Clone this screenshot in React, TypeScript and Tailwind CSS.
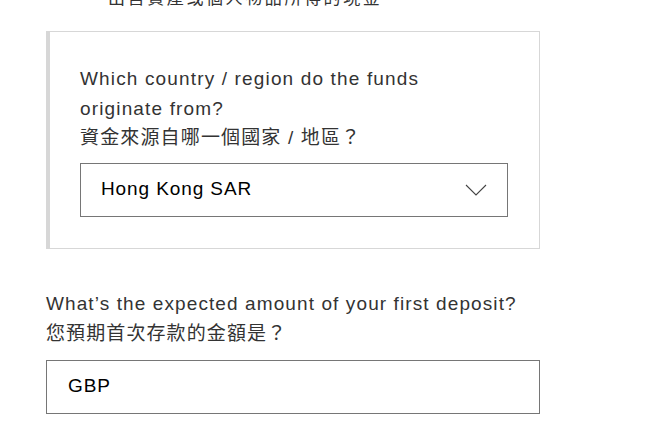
import React from "react";

const font = { fontFamily: '"Liberation Sans", "Noto Sans CJK TC", sans-serif' };

const Chevron: React.FC = () => (
  <svg width="22" height="12" viewBox="0 0 22 12" fill="none" className="shrink-0">
    <path d="M1 1l10 10L21 1" stroke="#444" strokeWidth="1.1" />
  </svg>
);

const App: React.FC = () => {
  return (
    <div className="w-[647px] h-[442px] overflow-hidden bg-white text-[#333]" style={font}>
      {/* option list tail, clipped by the viewport */}
      <p className="-mt-[11px] pl-[108px] text-[17px] leading-[20px] tracking-[2.6px] text-[#333]">
        出售資產或個人物品所得的現金
      </p>

      {/* nested question */}
      <div className="mt-[22px] ml-[46px] w-[494px] border border-l-4 border-[#d7d7d7] pl-[30px] pr-[31px] pt-[32px] pb-[31px]">
        <p className="text-[19px] leading-[29.5px] tracking-[1.15px]">
          Which country / region do the funds
          <br />
          originate from?
          <br />
          資金來源自哪一個國家 / 地區？
        </p>
        <div className="mt-[10px] h-[54px] flex items-center justify-between border border-[#767676] pl-[20px] pr-[20px]">
          <span className="text-[19px] tracking-[0.9px] text-black">Hong Kong SAR</span>
          <Chevron />
        </div>
      </div>

      {/* deposit amount */}
      <div className="mt-[40px] ml-[46px] w-[494px]">
        <p className="text-[19px] leading-[30px] tracking-[1.1px]">
          What’s the expected amount of your first deposit?
          <br />
          您預期首次存款的金額是？
        </p>
        <div className="mt-[11px] h-[54px] flex items-center border border-[#767676] pl-[21px]">
          <span className="text-[19px] tracking-[0.9px] text-black">GBP</span>
        </div>
      </div>
    </div>
  );
};

export default App;
